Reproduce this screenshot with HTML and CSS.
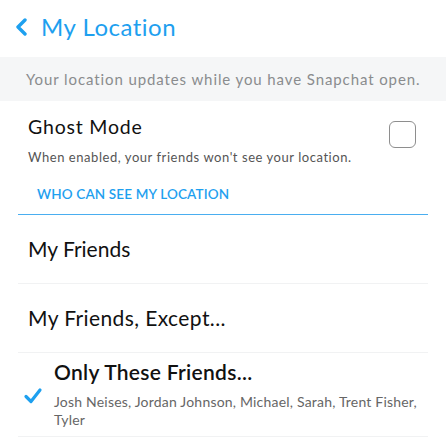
FILE: index.html
```html
<!DOCTYPE html>
<html>
<head>
<meta charset="utf-8">
<link rel="stylesheet" href="styles.css">
</head>
<body>
<div class="header">
  <svg class="back" width="14" height="18" viewBox="0 0 14 18"><path d="M11 2 L4 9 L11 16" fill="none" stroke="#1ea0ef" stroke-width="3.4" stroke-linecap="round" stroke-linejoin="round"/></svg>
  <span class="title">My Location</span>
</div>
<div class="note">Your location updates while you have Snapchat open.</div>
<div class="ghost">
  <div class="ghost-text">
    <div class="ghost-title">Ghost Mode</div>
    <div class="ghost-sub">When enabled, your friends won't see your location.</div>
  </div>
  <div class="checkbox"></div>
</div>
<div class="section">WHO CAN SEE MY LOCATION</div>
<div class="list">
  <div class="item">My Friends</div>
  <div class="item e">My Friends, Except...</div>
  <div class="item selected">
    <svg class="check" width="20" height="18" viewBox="0 0 20 18"><path d="M3 9.5 L8 14.5 L17 3" fill="none" stroke="#1ea0ef" stroke-width="3.2" stroke-linecap="round" stroke-linejoin="round"/></svg>
    <div class="sel-text">
      <div class="sel-title">Only These Friends...</div>
      <div class="sel-sub">Josh Neises, Jordan Johnson, Michael, Sarah, Trent Fisher, Tyler</div>
    </div>
  </div>
</div>
</body>
</html>
```
FILE: styles.css
```css
html, body {
  margin: 0;
  padding: 0;
  background: #ffffff;
  font-family: Lato, "Noto Sans", sans-serif;
}
.header {
  height: 52px;
  padding: 0 0 5px 14px;
  display: flex;
  align-items: center;
  gap: 13px;
}
.back { display: block; margin-top: 1px; }
.title {
  font-size: 24px;
  color: #1ea0ef;
  letter-spacing: 0.5px;
}
.note {
  height: 44px;
  background: #f5f6f7;
  color: #8a8c8e;
  font-size: 15px;
  display: flex;
  align-items: center;
  padding-left: 26px;
  letter-spacing: 0.9px;
}
.ghost {
  display: flex;
  justify-content: space-between;
  align-items: flex-start;
  padding: 13px 30px 0 28px;
}
.ghost-title {
  font-size: 19.5px;
  color: #111;
  line-height: 26px;
  letter-spacing: 0.8px;
}
.ghost-sub {
  font-size: 13px;
  color: #555;
  margin-top: 9px;
  letter-spacing: 0.55px;
}
.checkbox {
  width: 25px;
  height: 25px;
  border: 1.5px solid #8e8e8e;
  border-radius: 6px;
  margin-top: 7px;
}
.section {
  margin: 21px 18px 0;
  padding: 0 0 12px 19px;
  color: #1ea0ef;
  font-size: 13.5px;
  font-weight: 600;
  letter-spacing: 0.15px;
  border-bottom: 1.5px solid #4aaef0;
}
.list {
  margin: 0 18px;
}
.item {
  height: 69px;
  box-sizing: border-box;
  padding: 21px 0 0 10px;
  font-size: 21px;
  color: #111;
  border-bottom: 1px solid #f1f2f3;
}
.item.e { letter-spacing: 0.4px; }
.item.selected {
  height: auto;
  display: flex;
  padding: 6px 0 7px 5px;
  align-items: flex-start;
  gap: 11px;
}
.check { display: block; flex: none; margin-top: 28px; }
.sel-title {
  font-size: 21px;
  font-weight: 600;
  color: #111;
  letter-spacing: 0.3px;
}
.sel-sub {
  font-size: 14px;
  color: #666;
  line-height: 18px;
  margin-top: 9px;
  letter-spacing: 0.2px;
}
```
